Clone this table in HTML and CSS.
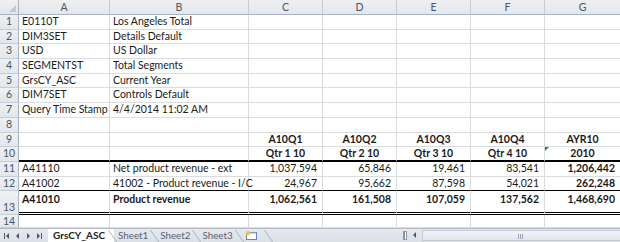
FILE: index.html
```html
<!DOCTYPE html>
<html>
<head>
<meta charset="utf-8">
<link rel="stylesheet" href="styles.css">
</head>
<body>
<div class="sheet">
  <div class="grid">
    <div class="corner hdr"><span class="tri"></span></div>
    <div class="colh hdr">A</div><div class="colh hdr">B</div><div class="colh hdr">C</div><div class="colh hdr">D</div><div class="colh hdr">E</div><div class="colh hdr">F</div><div class="colh hdr last">G</div>

    <div class="rowh hdr">1</div><div class="c">E0110T</div><div class="c">Los Angeles Total</div><div class="c"></div><div class="c"></div><div class="c"></div><div class="c"></div><div class="c last"></div>
    <div class="rowh hdr">2</div><div class="c">DIM3SET</div><div class="c">Details Default</div><div class="c"></div><div class="c"></div><div class="c"></div><div class="c"></div><div class="c last"></div>
    <div class="rowh hdr">3</div><div class="c">USD</div><div class="c">US Dollar</div><div class="c"></div><div class="c"></div><div class="c"></div><div class="c"></div><div class="c last"></div>
    <div class="rowh hdr">4</div><div class="c">SEGMENTST</div><div class="c">Total Segments</div><div class="c"></div><div class="c"></div><div class="c"></div><div class="c"></div><div class="c last"></div>
    <div class="rowh hdr">5</div><div class="c">GrsCY_ASC</div><div class="c">Current Year</div><div class="c"></div><div class="c"></div><div class="c"></div><div class="c"></div><div class="c last"></div>
    <div class="rowh hdr">6</div><div class="c">DIM7SET</div><div class="c">Controls Default</div><div class="c"></div><div class="c"></div><div class="c"></div><div class="c"></div><div class="c last"></div>
    <div class="rowh hdr">7</div><div class="c">Query Time Stamp</div><div class="c">4/4/2014 11:02 AM</div><div class="c"></div><div class="c"></div><div class="c"></div><div class="c"></div><div class="c last"></div>
    <div class="rowh hdr">8</div><div class="c"></div><div class="c"></div><div class="c"></div><div class="c"></div><div class="c"></div><div class="c"></div><div class="c last"></div>
    <div class="rowh hdr">9</div><div class="c"></div><div class="c"></div><div class="c b ctr">A10Q1</div><div class="c b ctr">A10Q2</div><div class="c b ctr">A10Q3</div><div class="c b ctr">A10Q4</div><div class="c b ctr last">AYR10</div>
    <div class="rowh hdr">10</div><div class="c thick"></div><div class="c thick"></div><div class="c b ctr thick">Qtr 1 10</div><div class="c b ctr thick">Qtr 2 10</div><div class="c b ctr thick">Qtr 3 10</div><div class="c b ctr thick">Qtr 4 10</div><div class="c b ctr thick last flag">2010</div>
    <div class="rowh hdr">11</div><div class="c">A41110</div><div class="c">Net product revenue - ext</div><div class="c num">1,037,594</div><div class="c num">65,846</div><div class="c num">19,461</div><div class="c num">83,541</div><div class="c num b last">1,206,442</div>
    <div class="rowh hdr">12</div><div class="c thin">A41002</div><div class="c thin">41002 - Product revenue - I/C</div><div class="c num thin">24,967</div><div class="c num thin">95,662</div><div class="c num thin">87,598</div><div class="c num thin">54,021</div><div class="c num b thin last">262,248</div>
    <div class="rowh hdr tall">13</div><div class="c b top dbl">A41010</div><div class="c b top dbl">Product revenue</div><div class="c num b top dbl">1,062,561</div><div class="c num b top dbl">161,508</div><div class="c num b top dbl">107,059</div><div class="c num b top dbl">137,562</div><div class="c num b top dbl last">1,468,690</div>
    <div class="rowh hdr">14</div><div class="c"></div><div class="c"></div><div class="c"></div><div class="c"></div><div class="c"></div><div class="c"></div><div class="c last"></div>
  </div>

  <div class="tabbar">
    <div class="nav">
      <svg width="46" height="14" viewBox="0 0 46 14">
        <g fill="#4d5868">
          <rect x="4" y="4" width="1" height="6"/>
          <path d="M9 4 L6 7 L9 10 Z"/>
          <path d="M19 4 L16 7 L19 10 Z"/>
          <path d="M27 4 L30 7 L27 10 Z"/>
          <path d="M37 4 L40 7 L37 10 Z"/>
          <rect x="41" y="4" width="1" height="6"/>
        </g>
      </svg>
    </div>
    <div class="tabs">
      <div class="tab active">GrsCY_ASC</div>
      <div class="tab">Sheet1</div>
      <div class="tab">Sheet2</div>
      <div class="tab">Sheet3</div>
      <div class="tab newtab">
        <svg width="14" height="11" viewBox="0 0 14 11">
          <rect x="2.5" y="2.5" width="10" height="7" fill="#fff" stroke="#6d86a8"/>
          <path d="M3 3 H12" stroke="#9fb3cc"/>
          <circle cx="4" cy="3" r="2.2" fill="#f2c14e"/>
        </svg>
      </div>
    </div>
    <div class="hscroll">
      <div class="split"></div>
      <div class="arrow">
        <svg width="8" height="10" viewBox="0 0 8 10"><path d="M5 2 L2 5 L5 8 Z" fill="#4d5868"/></svg>
      </div>
      <div class="track"><span class="grip"></span></div>
    </div>
  </div>
</div>
</body>
</html>
```
FILE: styles.css
```css
html, body {
  margin: 0;
  padding: 0;
  background: #fff;
}
.sheet {
  width: 620px;
  height: 242px;
  overflow: hidden;
  font-family: Lato, "Liberation Sans", Arial, sans-serif;
  font-size: 10.5px;
  color: #1a1a1a;
}
.grid {
  display: grid;
  grid-template-columns: 19px 91px 139px 74px 74px 74px 74px 75px;
  grid-template-rows: 15px repeat(12, 14.7px) 24px 12.6px;
}
.c {
  box-sizing: border-box;
  border-right: 1px solid #dadcdf;
  border-bottom: 1px solid #dadcdf;
  padding: 0 3px;
  line-height: 13.7px;
  white-space: nowrap;
  position: relative;
}
.c.last { border-right: none; }
.b { font-weight: bold; }
.ctr { text-align: center; }
.num { text-align: right; padding-right: 5px; }
.top { line-height: 16px; }
.thick { border-bottom: 2px solid #000; }
.thin { border-bottom: 1px solid #000; }
.dbl { border-bottom: 3px double #000; }
.hdr {
  box-sizing: border-box;
  background: linear-gradient(#eef0f3, #e3e6eb);
  color: #4b5563;
  text-align: center;
  border-right: 1px solid #c6ccd5;
  border-bottom: 1px solid #c6ccd5;
}
.colh {
  line-height: 15px;
  border-bottom: 1px solid #a9b2bf;
}
.colh.last { border-right: none; }
.rowh {
  line-height: 13.7px;
  border-right: 1px solid #a9b2bf;
}
.rowh.tall {
  display: flex;
  align-items: flex-end;
  justify-content: center;
  line-height: 14px;
}
.corner { position: relative; border-bottom: 1px solid #a9b2bf; border-right: 1px solid #a9b2bf; }
.tri {
  position: absolute;
  right: 2px;
  bottom: 2px;
  width: 0;
  height: 0;
  border-left: 7px solid transparent;
  border-bottom: 7px solid #c4c9d0;
}
.flag::before {
  content: "";
  position: absolute;
  left: 0;
  top: 0;
  width: 0;
  height: 0;
  border-top: 4px solid #1f8c2a;
  border-right: 4px solid transparent;
}

.tabbar {
  height: 14px;
  display: flex;
  background: linear-gradient(#e6e9ee, #dce1e7);
  border-top: 1px solid #b4bbc6;
  box-sizing: border-box;
  color: #5a6270;
}
.nav { width: 48px; flex: none; }
.nav svg { display: block; }
.tabs {
  display: flex;
  flex: none;
  width: 352px;
  align-items: stretch;
}
.tab {
  position: relative;
  padding: 0 8px 0 4px;
  line-height: 13px;
  font-size: 9.8px;
}
.tab::after {
  content: "";
  position: absolute;
  right: 1px;
  top: 1px;
  bottom: 0;
  border-right: 1px solid #a8b1bd;
  transform: skewX(35deg);
}
.tab.active {
  font-weight: bold;
  font-size: 10px;
  color: #222;
  background: #fff;
  padding-left: 5px;
  padding-right: 9px;
}
.newtab { padding: 1px 12px 0 3px; }
.newtab svg { display: block; }
.hscroll {
  flex: 1;
  display: flex;
  align-items: stretch;
}
.split {
  width: 4px;
  margin: 2px 2px 2px 3px;
  border: 1px solid #8c96a4;
  border-left-width: 2px;
  background: #fff;
  box-sizing: border-box;
}
.arrow { width: 12px; display: flex; align-items: center; justify-content: center; }
.track {
  flex: 1;
  margin: 1px 0 1px 1px;
  background: linear-gradient(#f2f4f7, #e2e6eb);
  border: 1px solid #c3c9d2;
  border-right: none;
  position: relative;
}
.grip {
  position: absolute;
  left: 95px;
  top: 3px;
  width: 6px;
  height: 5px;
  background: repeating-linear-gradient(90deg, #9aa3af 0 1px, transparent 1px 2px);
}
```
